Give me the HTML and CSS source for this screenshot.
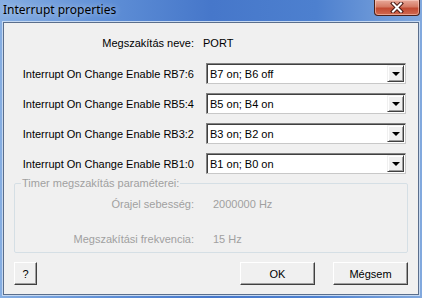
FILE: index.html
```html
<!DOCTYPE html>
<html lang="hu">
<head>
  <meta charset="UTF-8">
  <title>Interrupt properties</title>
  <link rel="stylesheet" href="styles.css">
</head>
<body>
  <div class="window">
    <div class="titlebar">
      <span class="title">Interrupt properties</span>
      <div class="close">
        <svg width="16" height="11" viewBox="0 0 16 11">
          <path d="M4 1.5 L12 9.5 M12 1.5 L4 9.5" stroke="#4a1a14" stroke-width="4" stroke-linecap="square"/>
          <path d="M4 1.5 L12 9.5 M12 1.5 L4 9.5" stroke="#ffffff" stroke-width="2" stroke-linecap="square"/>
        </svg>
      </div>
    </div>

    <div class="client">
      <div class="row name-row">
        <span class="label">Megszakítás neve:</span>
        <span class="value">PORT</span>
      </div>

      <div class="row combo-row">
        <span class="label">Interrupt On Change Enable RB7:6</span>
        <div class="combo"><span class="combo-text">B7 on; B6 off</span><span class="drop"></span></div>
      </div>
      <div class="row combo-row">
        <span class="label">Interrupt On Change Enable RB5:4</span>
        <div class="combo"><span class="combo-text">B5 on; B4 on</span><span class="drop"></span></div>
      </div>
      <div class="row combo-row">
        <span class="label">Interrupt On Change Enable RB3:2</span>
        <div class="combo"><span class="combo-text">B3 on; B2 on</span><span class="drop"></span></div>
      </div>
      <div class="row combo-row">
        <span class="label">Interrupt On Change Enable RB1:0</span>
        <div class="combo"><span class="combo-text">B1 on; B0 on</span><span class="drop"></span></div>
      </div>

      <fieldset class="group">
        <legend>Timer megszakítás paraméterei:</legend>
        <div class="row timer-row">
          <span class="label">Órajel sebesség:</span>
          <span class="value">2000000 Hz</span>
        </div>
        <div class="row timer-row second">
          <span class="label">Megszakítási frekvencia:</span>
          <span class="value">15 Hz</span>
        </div>
      </fieldset>

      <div class="buttons">
        <button class="btn help">?</button>
        <div class="spacer"></div>
        <button class="btn">OK</button>
        <button class="btn">Mégsem</button>
      </div>
    </div>
  </div>
</body>
</html>
```

FILE: styles.css
```css
* {
  margin: 0;
  padding: 0;
  box-sizing: border-box;
}

body {
  font-family: "Liberation Sans", Arial, sans-serif;
  font-size: 11px;
  background-color: #ffffff;
}

.window {
  width: 422px;
  height: 298px;
  padding: 0 3px 3px 3px;
  background: linear-gradient(to right, #86aee2 0%, #5f8fd6 25%, #4677ca 50%, #4d80cf 75%, #82a9de 100%);
  display: flex;
  flex-direction: column;
}

.titlebar {
  height: 22px;
  display: flex;
  align-items: flex-start;
  justify-content: space-between;
}

.title {
  font-family: "Noto Sans", sans-serif;
  font-size: 12px;
  line-height: 20px;
  color: #000;
  text-shadow: 0 0 6px rgba(255, 255, 255, 0.6);
}

.close {
  width: 46px;
  height: 16px;
  margin-right: -1px;
  border: 1px solid #4a2019;
  border-top: none;
  border-radius: 0 0 4px 4px;
  background: linear-gradient(to bottom, #e8a99a 0%, #d57a64 45%, #c24a32 55%, #d0694f 100%);
  box-shadow: inset 0 0 0 1px rgba(255, 220, 210, 0.5);
  display: flex;
  justify-content: center;
  align-items: center;
}

.client {
  flex: 1;
  background-color: #f0f0f0;
  border: 1px solid #5a6e8c;
  box-shadow: 0 0 0 1px #c6d9f1;
  padding: 10px 12px 0 0;
}

.row {
  display: flex;
  align-items: center;
}

.label {
  width: 190px;
  text-align: right;
  flex-shrink: 0;
}

.name-row {
  height: 20px;
}

.name-row .value {
  margin-left: 9px;
}

.combo-row {
  height: 21px;
  margin-top: 9px;
}

.name-row + .combo-row {
  margin-top: 10px;
}

.combo {
  margin-left: 12px;
  width: 200px;
  height: 21px;
  background-color: #fff;
  border: 1px solid #828282;
  border-right-color: #c8c8c8;
  border-bottom-color: #c8c8c8;
  box-shadow: inset 1px 1px 0 #404040;
  display: flex;
  align-items: center;
  justify-content: space-between;
  padding: 1px 1px 1px 3px;
}

.drop {
  width: 17px;
  height: 17px;
  background-color: #f0f0f0;
  border: 1px solid #f0f0f0;
  border-right-color: #404040;
  border-bottom-color: #404040;
  box-shadow: inset 1px 1px 0 #ffffff, inset -1px -1px 0 #a0a0a0;
  position: relative;
}

.drop::after {
  content: "";
  position: absolute;
  left: 4px;
  top: 6px;
  border-left: 4px solid transparent;
  border-right: 4px solid transparent;
  border-top: 4px solid #000;
}

.group {
  margin: 3px -2px 0 10px;
  border: 1px solid #d5dfe5;
  border-radius: 2px;
  padding: 0 0 3px 0;
  color: #a0a0a0;
}

.group legend {
  margin-left: 6px;
  padding: 0 1px;
  line-height: 13px;
}

.group .label {
  width: 179px;
}

.timer-row {
  height: 20px;
  margin-top: 4px;
}

.timer-row.second {
  margin-top: 15px;
}

.timer-row .value {
  margin-left: 19px;
}

.buttons {
  display: flex;
  margin: 9px -2px 0 10px;
  gap: 18px;
}

.spacer {
  flex: 1;
}

.btn {
  font-family: "Liberation Sans", Arial, sans-serif;
  font-size: 11px;
  width: 75px;
  height: 23px;
  background-color: #f0f0f0;
  color: #000;
  border: 1px solid #ffffff;
  border-right-color: #404040;
  border-bottom-color: #404040;
  box-shadow: inset -1px -1px 0 #a0a0a0;
}

.btn.help {
  width: 23px;
}
```
